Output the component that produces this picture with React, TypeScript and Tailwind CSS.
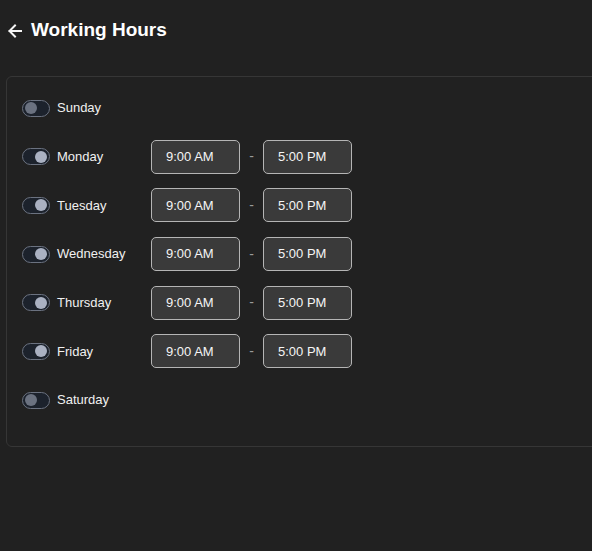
const days = [
  { name: "Sunday", on: false },
  { name: "Monday", on: true },
  { name: "Tuesday", on: true },
  { name: "Wednesday", on: true },
  { name: "Thursday", on: true },
  { name: "Friday", on: true },
  { name: "Saturday", on: false },
];

function Toggle({ on }: { on: boolean }) {
  return (
    <div
      className={`flex h-[17px] w-[28px] items-center rounded-full border border-[#6b7280] bg-[#1c222c] px-[2px] ${
        on ? "justify-end" : "justify-start"
      }`}
    >
      <div className={`h-[12px] w-[12px] rounded-full ${on ? "bg-[#aab1c2]" : "bg-[#6b7280]"}`} />
    </div>
  );
}

function TimeBox({ value }: { value: string }) {
  return (
    <div className="flex h-[34px] w-[89px] items-center rounded-[5px] border border-[#b5b5b5] bg-[#3a3a3a] px-[14px] text-[13px] text-[#f5f5f5]">
      {value}
    </div>
  );
}

export default function App() {
  return (
    <div
      className="min-h-[551px] w-full overflow-hidden bg-[#212121] text-white"
      style={{ fontFamily: '"Liberation Sans", Arial, sans-serif' }}
    >
      <div className="flex h-[60px] items-center gap-[8px] pl-[7px] pt-[1px]">
        <svg width="16" height="16" viewBox="0 0 16 16" fill="none" stroke="#f5f5f5" strokeWidth="2" strokeLinecap="square">
          <path d="M14 8H2.5M8 2.5L2.5 8L8 13.5" />
        </svg>
        <h1 className="text-[19px] font-bold text-white">Working Hours</h1>
      </div>
      <div className="ml-[6px] mt-[16px] -mr-[10px] rounded-[6px] border border-[#363636] pb-[29px] pl-[15px] pt-[14px]">
        <div className="flex flex-col gap-[14.7px]">
          {days.map((d) => (
            <div key={d.name} className="flex h-[34px] items-center">
              <Toggle on={d.on} />
              <span className="ml-[7px] w-[94px] text-[13px] text-[#f0f0f0]">{d.name}</span>
              {d.on && (
                <div className="flex items-center">
                  <TimeBox value="9:00 AM" />
                  <span className="w-[23px] text-center text-[14px] text-[#9a9a9a]">-</span>
                  <TimeBox value="5:00 PM" />
                </div>
              )}
            </div>
          ))}
        </div>
      </div>
    </div>
  );
}
